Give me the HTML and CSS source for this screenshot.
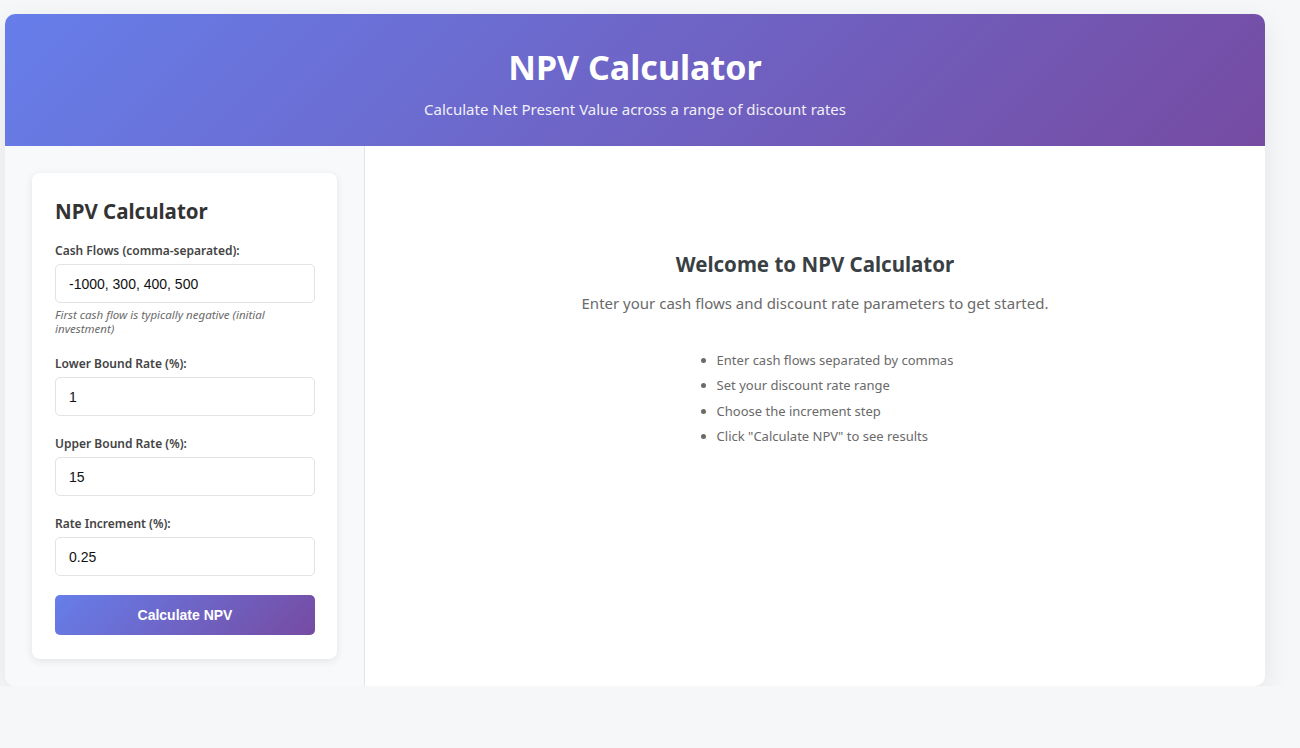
FILE: index.html
```html
<!DOCTYPE html>
<html lang="en">
<head>
<meta charset="utf-8">
<title>NPV Calculator</title>
<link rel="stylesheet" href="styles.css">
</head>
<body>
<div class="container">
  <header class="header">
    <h1>NPV Calculator</h1>
    <p>Calculate Net Present Value across a range of discount rates</p>
  </header>
  <div class="content">
    <aside class="sidebar">
      <div class="card">
        <h2>NPV Calculator</h2>
        <div class="field">
          <label>Cash Flows (comma-separated):</label>
          <input type="text" value="-1000, 300, 400, 500">
          <small>First cash flow is typically negative (initial investment)</small>
        </div>
        <div class="field">
          <label>Lower Bound Rate (%):</label>
          <input type="text" value="1">
        </div>
        <div class="field">
          <label>Upper Bound Rate (%):</label>
          <input type="text" value="15">
        </div>
        <div class="field">
          <label>Rate Increment (%):</label>
          <input type="text" value="0.25">
        </div>
        <button class="btn">Calculate NPV</button>
      </div>
    </aside>
    <main class="main">
      <div class="welcome">
        <h2>Welcome to NPV Calculator</h2>
        <p>Enter your cash flows and discount rate parameters to get started.</p>
        <ul>
          <li>Enter cash flows separated by commas</li>
          <li>Set your discount rate range</li>
          <li>Choose the increment step</li>
          <li>Click "Calculate NPV" to see results</li>
        </ul>
      </div>
    </main>
  </div>
</div>
</body>
</html>
```

FILE: styles.css
```css
* { box-sizing: border-box; }
html, body { margin: 0; padding: 0; }
body {
  background: #f6f7f9;
  font-family: "Noto Sans", "Open Sans", sans-serif;
  color: #333;
}
.container {
  margin: 14px 0 0 5px;
  width: 1260px;
  background: #fff;
  border-radius: 10px;
  overflow: hidden;
  box-shadow: 0 8px 28px rgba(0,0,0,0.08);
}
.header {
  height: 132px;
  background: linear-gradient(135deg, #667eea 0%, #764ba2 100%);
  color: #fff;
  text-align: center;
  padding-top: 30px;
}
.header h1 {
  margin: 0;
  font-size: 34px;
  line-height: 46px;
  font-weight: 700;
}
.header p {
  margin: 9px 0 0;
  font-size: 15px;
  line-height: 20px;
  opacity: 0.9;
}
.content {
  display: flex;
}
.sidebar {
  width: 360px;
  flex: none;
  background: #f8f9fa;
  border-right: 1px solid #e2e4e8;
  padding: 27px;
}
.card {
  background: #fff;
  border-radius: 8px;
  box-shadow: 0 2px 8px rgba(0,0,0,0.09);
  padding: 25px 22px 24px 23px;
}
.card h2 {
  margin: 0 0 19px;
  font-size: 20.5px;
  line-height: 26px;
  font-weight: 700;
  color: #333;
}
.field {
  margin-bottom: 20px;
}
.field label {
  display: block;
  font-size: 12px;
  line-height: 16px;
  font-weight: 600;
  color: #444;
  margin-bottom: 5px;
}
.field input {
  display: block;
  width: 100%;
  height: 39px;
  border: 1px solid #e1e3e6;
  border-radius: 5px;
  padding: 0 13px;
  font-family: "Liberation Sans", Arial, sans-serif;
  font-size: 14px;
  color: #111;
  background: #fff;
}
.field small {
  display: block;
  margin-top: 5px;
  font-size: 11.5px;
  line-height: 14px;
  font-style: italic;
  color: #6b6b6b;
}
.btn {
  display: block;
  width: 100%;
  height: 40px;
  border: none;
  border-radius: 5px;
  background: linear-gradient(135deg, #667eea 0%, #764ba2 100%);
  color: #fff;
  font-family: "Liberation Sans", Arial, sans-serif;
  font-size: 14px;
  font-weight: 700;
  margin-top: -1px;
}
.main {
  flex: 1;
  padding: 104px 40px 40px;
}
.welcome {
  text-align: center;
  color: #666;
}
.welcome h2 {
  margin: 0;
  font-size: 20.5px;
  line-height: 28px;
  font-weight: 700;
  color: #3a3f44;
}
.welcome p {
  margin: 14px 0 0;
  font-size: 15px;
  line-height: 22px;
  color: #6a6a6a;
}
.welcome ul {
  display: inline-block;
  text-align: left;
  margin: 38px 0 0;
  padding-left: 40px;
  font-size: 13px;
  line-height: 17px;
  color: #6a6a6a;
}
.welcome li {
  margin-bottom: 8.3px;
}
```
